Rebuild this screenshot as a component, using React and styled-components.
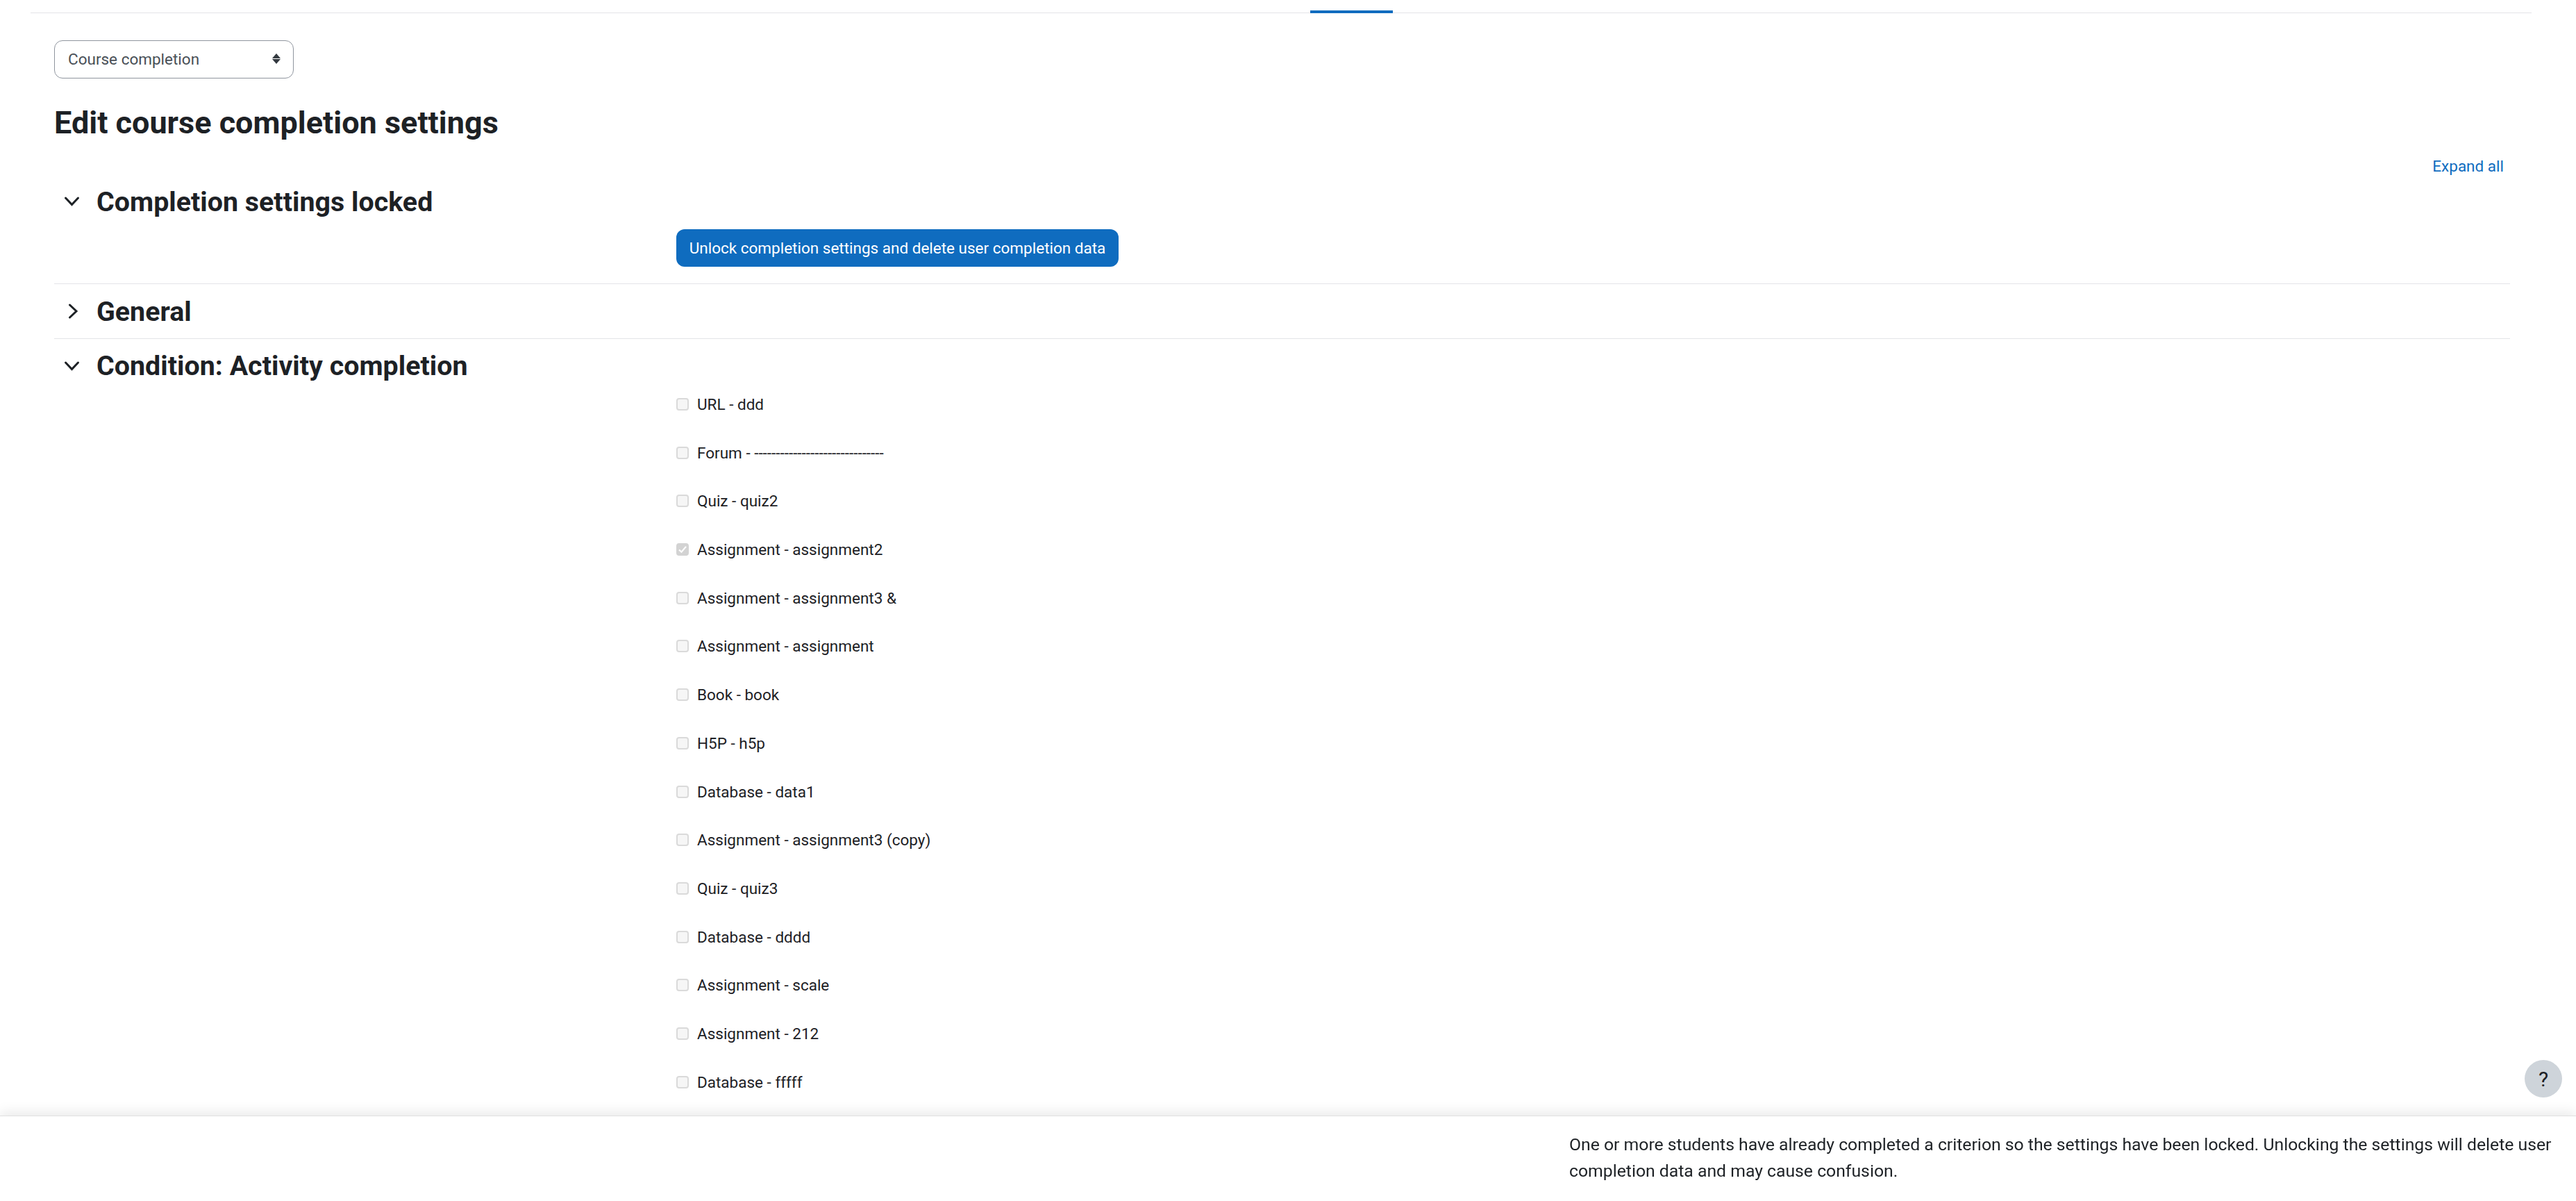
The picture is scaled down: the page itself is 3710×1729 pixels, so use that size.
import styled, { createGlobalStyle } from 'styled-components'

const GlobalStyle = createGlobalStyle`
html, body {
  margin: 0;
  padding: 0;
  height: 100%;
  overflow: hidden;
  background: #fff;
  font-family: Roboto, "Liberation Sans", sans-serif;
  color: #1d2125;
}
`

const Page = styled.div`
height: 1729px;
overflow: hidden;
`
const TopNav = styled.div`
position: relative;
margin: 0 64px 0 44px;
height: 18px;
border-bottom: 1px solid #e3e4e8;
`
const ActiveTab = styled.div`
position: absolute;
left: 1843px;
bottom: -1px;
width: 119px;
height: 4px;
background: #0f6cbf;
`
const Main = styled.div`
padding: 39px 95px 0 78px;
`
const SelectBox = styled.div`
box-sizing: border-box;
width: 345px;
height: 55px;
padding: 0 18px 2px 19px;
display: flex;
align-items: center;
justify-content: space-between;
border: 1px solid #8f959e;
border-radius: 12px;
font-size: 22.5px;
color: #495057;
`
const PageTitle = styled.h2`
margin: 37px 0 0;
font-size: 45px;
line-height: 54px;
font-weight: 700;
`
const ExpandRow = styled.div`
display: flex;
justify-content: flex-end;
margin-top: 18px;
padding-right: 9px;
`
const ExpandLink = styled.a`
font-size: 22.5px;
line-height: 34px;
color: #0f6cbf;
`
const Section = styled.div`
border-bottom: ${(p) => (p.$last ? 'none' : '1px solid #e3e4e8')};
padding-bottom: ${(p) => p.$pad || 0}px;
`
const SectionHead = styled.div`
display: flex;
align-items: center;
height: ${(p) => p.$height}px;
`
const ChevronSlot = styled.span`
width: 61px;
padding-left: 14px;
box-sizing: border-box;
display: flex;
`
const SectionTitle = styled.h3`
margin: 0;
font-size: 39.4px;
font-weight: 700;
`
const Body = styled.div`
padding: ${(p) => p.$top || 0}px 0 0 896px;
`
const PrimaryButton = styled.button`
box-sizing: border-box;
width: 637px;
height: 54px;
border: 0;
border-radius: 12px;
background: #0f6cbf;
color: #fff;
font-family: inherit;
font-size: 22.5px;
padding: 0;
`
const CheckList = styled.div`
display: flex;
flex-direction: column;
gap: 35.7px;
`
const CheckRow = styled.label`
display: flex;
align-items: center;
height: 34px;
font-size: 22.5px;
`
const Box = styled.span`
box-sizing: border-box;
width: 18px;
height: 18px;
margin-right: 12px;
border: 2px solid ${(p) => (p.$checked ? '#d3d3d3' : '#dadada')};
border-radius: 4px;
background: ${(p) => (p.$checked ? '#d3d3d3' : '#f6f6f6')};
display: flex;
align-items: center;
justify-content: center;
`
const Footer = styled.div`
position: fixed;
left: 0;
right: 0;
top: 1606px;
bottom: 0;
background: #fff;
border-top: 1px solid #e0e0e0;
box-shadow: 0 -6px 16px rgba(0, 0, 0, 0.08);
padding: 22px 20px 0 2260px;
font-size: 24.75px;
line-height: 38px;
`
const HelpButton = styled.div`
position: fixed;
left: 3636px;
top: 1526px;
width: 54px;
height: 54px;
border-radius: 50%;
background: #ced4da;
display: flex;
align-items: center;
justify-content: center;
font-size: 30px;
z-index: 2;
`

const ChevronDown = () => (
  <svg width="24" height="16" viewBox="0 0 24 16" fill="none" stroke="#1d2125" strokeWidth="3" strokeLinecap="round">
    <path d="M2.5 3 L11.5 12.5 L20.5 3" />
  </svg>
)
const ChevronRight = () => (
  <svg width="24" height="22" viewBox="0 0 24 22" fill="none" stroke="#1d2125" strokeWidth="3" strokeLinecap="round">
    <path d="M8.5 2 L18 11 L8.5 20" />
  </svg>
)
const SortArrows = () => (
  <svg width="12" height="15" viewBox="0 0 12 15" fill="#343a40">
    <path d="M6 0 L12 7 L0 7 Z" />
    <path d="M6 15 L12 8 L0 8 Z" />
  </svg>
)
const Tick = () => (
  <svg width="12" height="10" viewBox="0 0 13 11" fill="none" stroke="#fff" strokeWidth="2.4">
    <path d="M1 6 L4.8 9.5 L12 1" />
  </svg>
)

const activities = [
  'URL - ddd',
  'Forum - ------------------------------',
  'Quiz - quiz2',
  'Assignment - assignment2',
  'Assignment - assignment3 &',
  'Assignment - assignment',
  'Book - book',
  'H5P - h5p',
  'Database - data1',
  'Assignment - assignment3 (copy)',
  'Quiz - quiz3',
  'Database - dddd',
  'Assignment - scale',
  'Assignment - 212',
  'Database - fffff',
]

const App = () => {
  return (
    <Page>
      <GlobalStyle />
      <TopNav>
        <ActiveTab />
      </TopNav>
      <Main>
        <SelectBox>
          <span>Course completion</span>
          <SortArrows />
        </SelectBox>
        <PageTitle>Edit course completion settings</PageTitle>
        <ExpandRow>
          <ExpandLink>Expand all</ExpandLink>
        </ExpandRow>
        <Section $pad={24}>
          <SectionHead $height={68}>
            <ChevronSlot><ChevronDown /></ChevronSlot>
            <SectionTitle>Completion settings locked</SectionTitle>
          </SectionHead>
          <Body $top={6}>
            <PrimaryButton>Unlock completion settings and delete user completion data</PrimaryButton>
          </Body>
        </Section>
        <Section>
          <SectionHead $height={78}>
            <ChevronSlot><ChevronRight /></ChevronSlot>
            <SectionTitle>General</SectionTitle>
          </SectionHead>
        </Section>
        <Section $last>
          <SectionHead $height={77}>
            <ChevronSlot><ChevronDown /></ChevronSlot>
            <SectionTitle>Condition: Activity completion</SectionTitle>
          </SectionHead>
          <Body>
            <CheckList>
              {activities.map((name) => (
                <CheckRow key={name}>
                  <Box $checked={name === 'Assignment - assignment2'}>
                    {name === 'Assignment - assignment2' && <Tick />}
                  </Box>
                  {name}
                </CheckRow>
              ))}
            </CheckList>
          </Body>
        </Section>
      </Main>
      <HelpButton>?</HelpButton>
      <Footer>
        One or more students have already completed a criterion so the settings have been locked. Unlocking the settings will delete user completion data and may cause confusion.
      </Footer>
    </Page>
  )
}

export default App
